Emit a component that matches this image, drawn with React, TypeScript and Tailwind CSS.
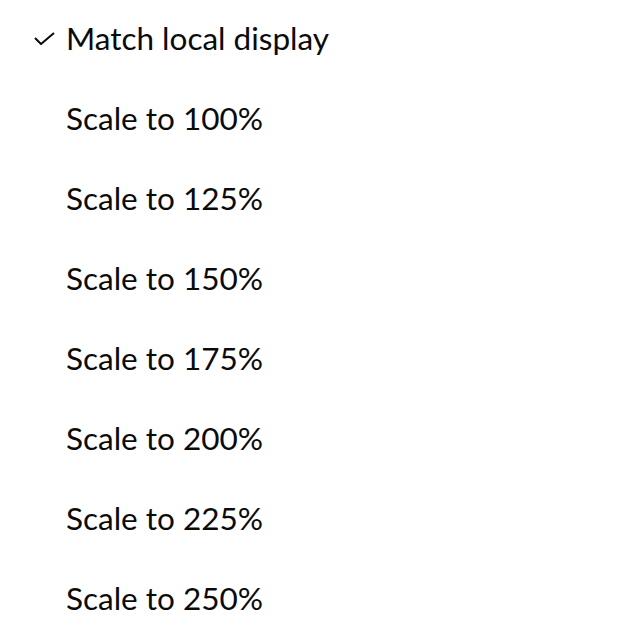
import React from "react";

const items = [
  "Match local display",
  "Scale to 100%",
  "Scale to 125%",
  "Scale to 150%",
  "Scale to 175%",
  "Scale to 200%",
  "Scale to 225%",
  "Scale to 250%",
];

export default function App() {
  return (
    <div className="w-[632px] h-[634px] bg-white overflow-hidden" style={{ fontFamily: "Lato, 'Open Sans', sans-serif" }}>
      <div className="flex flex-col mt-[-1px]">
        {items.map((t, i) => (
          <div key={t} className="flex items-center h-[80px] text-[31.5px] text-[#0a0a0a]">
            <div className="w-[66px] flex justify-end pr-[11px]">
              {i === 0 && (
                <svg width="21" height="13" viewBox="0 0 21 13" fill="none" className="mt-[-2px]">
                  <path d="M1 6 L7 12 L20 1" stroke="#0a0a0a" strokeWidth="2" />
                </svg>
              )}
            </div>
            <span>{t}</span>
          </div>
        ))}
      </div>
    </div>
  );
}
